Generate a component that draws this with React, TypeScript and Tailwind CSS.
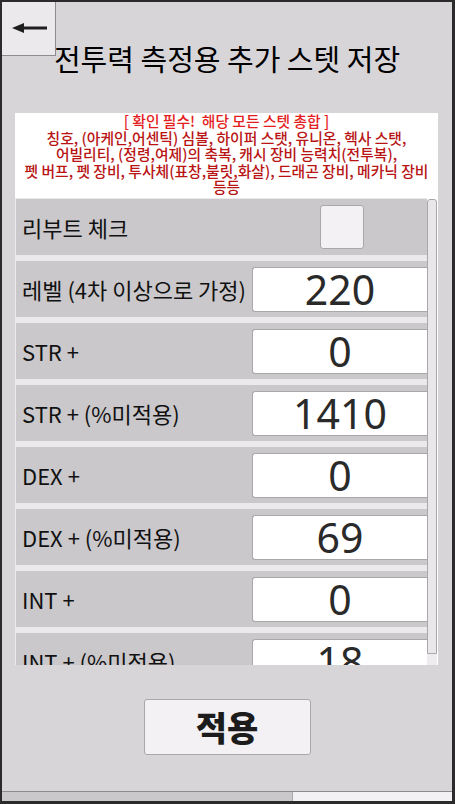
import React from 'react';

const KR = { fontFamily: '"Noto Sans CJK KR", "Noto Sans", sans-serif' };

const rows: { label: string; value?: string }[] = [
  { label: '리부트 체크' },
  { label: '레벨 (4차 이상으로 가정)', value: '220' },
  { label: 'STR +', value: '0' },
  { label: 'STR + (%미적용)', value: '1410' },
  { label: 'DEX +', value: '0' },
  { label: 'DEX + (%미적용)', value: '69' },
  { label: 'INT +', value: '0' },
  { label: 'INT + (%미적용)', value: '18' },
];

const App: React.FC = () => {
  return (
    <div
      className="relative flex flex-col w-[455px] h-[804px] overflow-hidden bg-[#d7d5d8] border-[#2b2b2b] border-t-2 border-l-2 border-r-[3px] border-b-[3px]"
      style={KR}
    >
      {/* back button */}
      <button className="absolute top-0 left-0 w-[54px] h-[54px] bg-[#ebe9ec] border-r border-b border-[#8d8b8e] flex items-start pt-[21px] pl-[10px]">
        <svg width="35" height="10" viewBox="0 0 35 10">
          <polygon points="0,5 12,0 12,10" fill="#1e1e1e" />
          <rect x="10" y="3.5" width="25" height="3" fill="#1e1e1e" />
        </svg>
      </button>

      {/* title */}
      <div className="h-[111px] pt-[40px] text-center">
        <h1 className="text-[29px] leading-[32px] font-normal text-black">전투력 측정용 추가 스텟 저장</h1>
      </div>

      {/* main panel */}
      <div className="ml-[13px] w-[423px] h-[552px] bg-white flex flex-col">
        <div className="h-[85px] text-center text-[14.8px] leading-[16.6px] font-medium text-[#b81414]">
          <div className="text-[#e41e1e] whitespace-pre">[ 확인 필수!  해당 모든 스텟 총합 ]</div>
          <div className="whitespace-nowrap">칭호, (아케인,어센틱) 심볼, 하이퍼 스탯, 유니온, 헥사 스탯,</div>
          <div className="whitespace-nowrap">어빌리티, (정령,여제)의 축복, 캐시 장비 능력치(전투복),</div>
          <div className="whitespace-nowrap">펫 버프, 펫 장비, 투사체(표창,불릿,화살), 드래곤 장비, 메카닉 장비</div>
          <div>등등</div>
        </div>

        <div className="flex flex-1 overflow-hidden">
          <div className="flex-1 pl-[1px] pt-[1px] bg-[#ebe9ec] flex flex-col gap-[6px] overflow-hidden">
            {rows.map((row) => (
              <div key={row.label} className="shrink-0 h-[56px] bg-[#cac8cb] flex items-center">
                <span className="pl-[6px] w-[236px] text-[22px] text-[#111] whitespace-nowrap">{row.label}</span>
                {row.value === undefined ? (
                  <div className="ml-[68px] w-[44px] h-[44px] bg-[#f3f1f4] border border-[#a9a7aa] rounded-[3px]" />
                ) : (
                  <div className="flex-1 h-[45px] bg-white border border-r-0 border-[#a9a7aa] rounded-l-[3px] flex items-center justify-center">
                    <span className="text-[41px] leading-none text-[#2a2a2a] font-normal" style={{ fontFamily: '"Noto Sans", sans-serif' }}>
                      {row.value}
                    </span>
                  </div>
                )}
              </div>
            ))}
          </div>

          {/* vertical scrollbar */}
          <div className="w-[11px] flex flex-col bg-white">
            <div className="mt-[1px] h-[455px] w-[10px] bg-[#e9e7ea] border border-[#a9a7aa] rounded-t-[3px]" />
            <div className="h-[11px] w-[10px] bg-[#eeecef]" />
          </div>
        </div>
      </div>

      {/* apply button */}
      <div className="flex justify-center mt-[34px]">
        <button className="w-[167px] h-[56px] bg-[#f3f1f4] border border-[#a9a7aa] rounded-[3px] text-[34px] font-black text-[#1c1c1c] leading-none">
          적용
        </button>
      </div>

      <div className="flex-1" />

      {/* horizontal scrollbar */}
      <div className="h-[10px] flex border-t border-[#8d8b8e]">
        <div className="w-[290px] bg-[#cac8cb]" />
        <div className="flex-1 bg-[#f3f1f4] border-l border-[#a9a7aa]" />
      </div>
    </div>
  );
};

export default App;
